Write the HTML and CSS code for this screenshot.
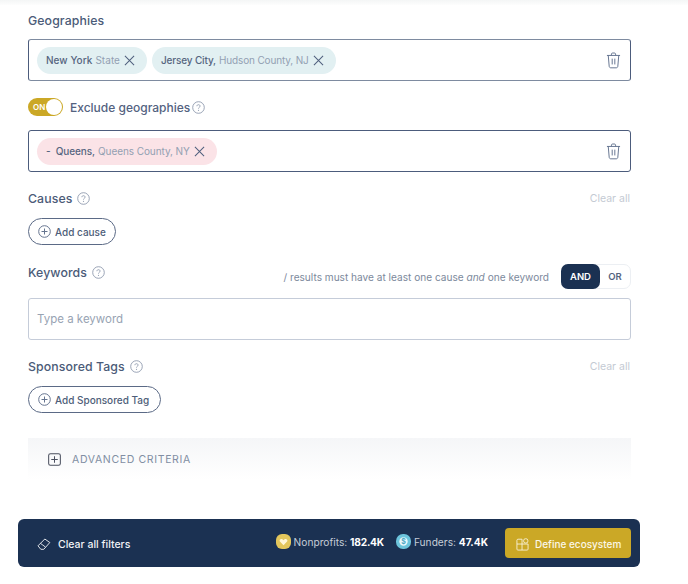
FILE: index.html
```html
<!DOCTYPE html>
<html lang="en">
<head>
<meta charset="utf-8">
<title>Filters</title>
<link rel="stylesheet" href="styles.css">
</head>
<body>
<svg class="defs" width="0" height="0" aria-hidden="true">
  <symbol id="x" viewBox="0 0 12 12"><path d="M1 1l10 10M11 1L1 11" fill="none" stroke="currentColor" stroke-width="1.100"/></symbol>
  <symbol id="trash" viewBox="0 0 16 18"><path d="M1 3.600h14M2.400 3.600l1 11.600c.1 1 .8 1.600 1.700 1.600h5.800c.9 0 1.600-.6 1.700-1.600l1-11.600M5.800 3.400V2.200c0-.7.500-1.200 1.200-1.200h2c.7 0 1.200.500 1.200 1.200v1.200M6.600 7v6.200M9.400 7v6.200" fill="none" stroke="currentColor" stroke-width="1"/></symbol>
  <symbol id="help" viewBox="0 0 13 13"><circle cx="6.500" cy="6.500" r="5.800" fill="none" stroke="currentColor" stroke-width=".9"/><path d="M4.900 5.200c0-1 .7-1.500 1.600-1.500s1.600.6 1.600 1.400c0 1.200-1.600 1.200-1.600 2.500" fill="none" stroke="currentColor" stroke-width=".9"/><circle cx="6.500" cy="9.300" r=".6" fill="currentColor"/></symbol>
  <symbol id="plus" viewBox="0 0 13 13"><circle cx="6.500" cy="6.500" r="5.800" fill="none" stroke="currentColor"/><path d="M6.500 3.500v6M3.500 6.500h6" fill="none" stroke="currentColor"/></symbol>
</svg>

<div class="top-strip"></div>
<main class="panel">
  <h2 class="label label-first">Geographies</h2>
  <div class="tag-box tag-box-muted">
    <span class="chip chip-teal chip-wide"><b>New York</b> <i>State</i><svg class="chip-x"><use href="#x"/></svg></span>
    <span class="chip chip-teal"><b>Jersey City,</b> <i>Hudson County, NJ</i><svg class="chip-x"><use href="#x"/></svg></span>
    <svg class="trash"><use href="#trash"/></svg>
  </div>

  <div class="exclude-row">
    <span class="toggle"><span class="toggle-text">ON</span><span class="knob"></span></span>
    <span class="exclude-label">Exclude geographies</span>
    <svg class="help"><use href="#help"/></svg>
  </div>
  <div class="tag-box">
    <span class="chip chip-pink"><b>-&nbsp; Queens,</b> <i>Queens County, NY</i><svg class="chip-x"><use href="#x"/></svg></span>
    <svg class="trash"><use href="#trash"/></svg>
  </div>

  <div class="head-row causes-head">
    <h2 class="label">Causes</h2><svg class="help"><use href="#help"/></svg>
    <span class="clear">Clear all</span>
  </div>
  <button class="add-btn add-cause"><svg class="plus"><use href="#plus"/></svg>Add cause</button>

  <div class="head-row keywords-head">
    <h2 class="label">Keywords</h2><svg class="help"><use href="#help"/></svg>
    <span class="hint">/ results must have at least one cause <em>and</em> one keyword</span>
    <span class="seg"><span class="seg-on">AND</span><span class="seg-off">OR</span></span>
  </div>
  <div class="keyword-input">Type a keyword</div>

  <div class="head-row sponsored-head">
    <h2 class="label">Sponsored Tags</h2><svg class="help"><use href="#help"/></svg>
    <span class="clear">Clear all</span>
  </div>
  <button class="add-btn add-tag"><svg class="plus"><use href="#plus"/></svg>Add Sponsored Tag</button>

  <div class="advanced">
    <svg class="adv-icon" viewBox="0 0 14 14"><rect x=".7" y=".7" width="12.600" height="12.600" rx="2" fill="none" stroke="currentColor" stroke-width="1.100"/><path d="M7 3.500v7M3.500 7h7" fill="none" stroke="currentColor" stroke-width="1.100"/></svg>
    <span>ADVANCED CRITERIA</span>
  </div>
</main>

<footer class="bar">
  <span class="clear-filters">
    <svg class="eraser" viewBox="0 0 14 13"><path d="M1 8.300L7.800 1.500l5 3.500-6 6.800H3.800zM3.400 5.800l5 3.700" fill="none" stroke="currentColor" stroke-width=".9"/></svg>
    <span>Clear all filters</span>
  </span>
  <span class="stat stat-first">
    <svg class="badge" viewBox="0 0 15 15"><rect width="15" height="15" rx="6" fill="#e3c65c"/><path d="M7.500 11.300L3.900 7.500c-1.200-1.400.9-3.500 2.500-2.200l1.100.9 1.100-.9c1.600-1.300 3.700.8 2.500 2.200z" fill="#fff6d8"/></svg>
    <span>Nonprofits: <b>182.4K</b></span>
  </span>
  <span class="stat">
    <svg class="badge" viewBox="0 0 15 15"><rect width="15" height="15" rx="7" fill="#6cc4dc"/><circle cx="7.500" cy="7.500" r="4.200" fill="#eaf8fb"/><text x="7.500" y="10" text-anchor="middle" class="badge-dollar">$</text></svg>
    <span>Funders: <b>47.4K</b></span>
  </span>
  <button class="define">
    <svg class="define-icon" viewBox="0 0 14 14"><path d="M1 6.500h5.500V13H2c-.6 0-1-.4-1-1zM1 6.500V2.500c0-.8.600-1.200 1.200-1.200h4.300v5.200M6.500 6.500H13V12c0 .6-.4 1-1 1H6.500" fill="none" stroke="currentColor" stroke-width=".9"/><rect x="8.200" y=".8" width="4.600" height="4.600" rx="2" fill="none" stroke="currentColor" stroke-width=".9"/></svg>
    <span>Define ecosystem</span>
  </button>
</footer>
</body>
</html>
```

FILE: styles.css
```css
* { box-sizing: border-box; }
html, body { margin: 0; padding: 0; }
body {
  width: 688px;
  height: 584px;
  overflow: hidden;
  background: #fff;
  font-family: "Inter", "Liberation Sans", sans-serif;
  color: #4f5f7d;
}
.defs { position: absolute; }
.top-strip {
  height: 5px;
  background: linear-gradient(#f4f6f6, #fdfdfd);
}
.panel {
  width: 603px;
  margin-left: 28px;
}
.label {
  margin: 0;
  font-size: 12.300px;
  line-height: 18px;
  font-weight: 500;
  color: #4b5b78;
  letter-spacing: .1px;
}
.label-first { margin-top: 7px; margin-bottom: -1px; }
.causes-head .label, .sponsored-head .label { margin-top: 2px; }

.tag-box {
  position: relative;
  display: flex;
  align-items: center;
  gap: 5px;
  height: 42px;
  margin-top: 10px;
  padding-left: 8px;
  border: 1px solid #4c5c7c;
  border-radius: 3px;
}
.tag-box-muted {
  border-top-color: #7e8ba0;
  border-bottom-color: #7e8ba0;
}
.chip {
  display: inline-flex;
  align-items: center;
  height: 27px;
  padding: 0 12px 0 9px;
  border-radius: 14px;
  font-size: 10px;
  white-space: nowrap;
  letter-spacing: -.15px;
}
.chip b { font-weight: 500; color: #566580; margin-right: 3px; }
.chip i { font-style: normal; color: #93a0b2; }
.chip-teal { background: #e2f0f2; }
.chip-pink { background: #fbe3e7; letter-spacing: -.08px; }
.chip-wide { letter-spacing: .05px; }
.chip-x { width: 11px; height: 11px; margin-left: 4px; color: #4f5f7d; }
.trash {
  width: 15px;
  height: 17px;
  margin-left: auto;
  margin-right: 9px;
  color: #5f6f8c;
}
.exclude-row {
  display: flex;
  align-items: center;
  height: 18px;
  margin-top: 17px;
  margin-bottom: 14px;
}
.exclude-row .help { margin-left: 2px; }
.toggle {
  position: relative;
  display: block;
  width: 35px;
  height: 18px;
  border-radius: 9px;
  background: #cba826;
}
.toggle-text {
  position: absolute;
  left: 5px;
  top: 5px;
  font-size: 8px;
  line-height: 9px;
  font-weight: 600;
  color: #fff;
}
.knob {
  position: absolute;
  right: 1px;
  top: 1px;
  width: 16px;
  height: 16px;
  border-radius: 50%;
  background: #fff;
}
.exclude-label {
  margin-left: 7px;
  font-size: 12px;
  font-weight: 500;
  color: #53627f;
}
.help {
  width: 13px;
  height: 13px;
  margin-left: 5px;
  color: #8e9aae;
  flex: none;
}
.head-row {
  display: flex;
  align-items: center;
}
.causes-head { height: 18px; margin-top: 17px; }
.clear {
  margin-left: auto;
  margin-right: 1px;
  font-size: 10.500px;
  color: #c4cad3;
}
.add-btn {
  display: flex;
  align-items: center;
  height: 27px;
  padding: 0 9px;
  background: #fff;
  border: 1px solid #5b6a86;
  border-radius: 14px;
  font-family: inherit;
  font-size: 10px;
  font-weight: 500;
  color: #4d5d78;
  white-space: nowrap;
}
.plus { width: 13px; height: 13px; margin-right: 4px; color: #65748f; flex: none; }
.add-cause { width: 88px; margin-top: 11px; }
.add-tag { width: 133px; margin-top: 11px; }
.keywords-head { height: 25px; margin-top: 19px; }
.keywords-head .label { margin-top: -7px; }
.keywords-head .help { margin-top: -9px; }
.hint {
  margin-left: auto;
  margin-right: 12px;
  font-size: 10.100px;
  color: #7c899c;
}
.seg {
  display: flex;
  width: 70px;
  height: 25px;
  border: 1px solid #eceff3;
  border-radius: 7px;
}
.seg-on {
  display: flex;
  align-items: center;
  justify-content: center;
  width: 39px;
  margin: -1px 0 -1px -1px;
  border-radius: 7px;
  background: #1b3152;
  color: #fff;
  font-size: 9.500px;
  font-weight: 600;
}
.seg-off {
  display: flex;
  align-items: center;
  justify-content: center;
  flex: 1;
  font-size: 9.500px;
  font-weight: 600;
  color: #55647f;
}
.keyword-input {
  display: flex;
  align-items: center;
  height: 42px;
  margin-top: 9px;
  padding-left: 8px;
  border: 1px solid #c5ccd9;
  border-radius: 3px;
  font-size: 11.500px;
  color: #98a3b3;
}
.sponsored-head { height: 18px; margin-top: 17px; }
.advanced {
  display: flex;
  align-items: center;
  height: 42px;
  margin-top: 25px;
  padding-left: 20px;
  background: linear-gradient(#f5f6f8, #fff);
  font-size: 10.500px;
  letter-spacing: .65px;
  color: #818ea3;
}
.adv-icon {
  width: 13px;
  height: 13px;
  margin-right: 11px;
  color: #4a4f5e;
}
.bar {
  display: flex;
  align-items: center;
  width: 622px;
  height: 48px;
  margin: 39px 0 0 18px;
  padding: 0 9px 0 19px;
  background: #1b3152;
  border-radius: 6px;
  color: #fff;
  font-size: 10.200px;
}
.clear-filters {
  display: flex;
  align-items: center;
  margin-top: 2px;
  font-size: 10.500px;
  font-weight: 500;
  color: #f1f3f6;
}
.eraser { width: 14px; height: 14px; margin-right: 7px; color: #f1f3f6; }
.stat {
  display: flex;
  align-items: center;
  margin-top: -3px;
  color: #c6cdd8;
  white-space: nowrap;
}
.stat b { font-weight: 700; color: #fff; }
.stat-first b { letter-spacing: -.2px; }
.stat-first { margin-left: auto; margin-right: 12px; }
.badge { width: 15px; height: 15px; margin-right: 3px; flex: none; }
.badge-dollar {
  font-size: 7px;
  font-weight: 700;
  fill: #4aa9c4;
}
.define {
  display: flex;
  align-items: center;
  width: 126px;
  height: 30px;
  margin-left: 17px;
  padding: 2px 0 0 11px;
  background: #cba826;
  border: 0;
  border-radius: 4px;
  font-family: inherit;
  font-size: 10px;
  font-weight: 500;
  color: #fbf7e6;
}
.define-icon { width: 13px; height: 13px; margin-right: 6px; }
```
